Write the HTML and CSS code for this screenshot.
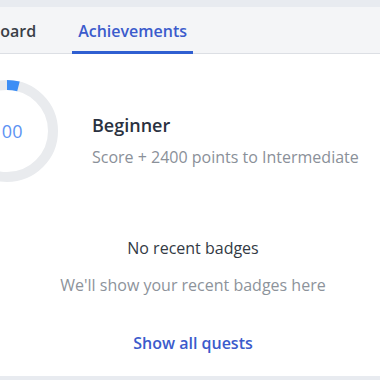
FILE: index.html
```html
<!DOCTYPE html>
<html lang="en">
<head>
    <meta charset="UTF-8">
    <title>Achievements</title>
    <link rel="stylesheet" href="styles.css">
</head>
<body>

<div class="card">

    <!-- Tabs -->
    <div class="tabs">
        <div class="tab">Leaderboard</div>
        <div class="tab active">Achievements</div>
    </div>

    <!-- Level -->
    <div class="level">
        <div class="ring">
            <svg width="102" height="102" viewBox="0 0 102 102">
                <circle cx="51" cy="51" r="46" fill="none" stroke="#e9ebee" stroke-width="10"/>
                <circle cx="51" cy="51" r="46" fill="none" stroke="#3d8ef5" stroke-width="10"
                        stroke-dasharray="11.6 289" transform="rotate(-90 51 51)"/>
            </svg>
            <span class="ring-score">100</span>
        </div>
        <div class="level-info">
            <div class="level-name">Beginner</div>
            <div class="level-next">Score + 2400 points to Intermediate</div>
        </div>
    </div>

    <!-- Badges -->
    <div class="badges">
        <div class="badges-title">No recent badges</div>
        <div class="badges-text">We'll show your recent badges here</div>
        <a class="quests" href="#">Show all quests</a>
    </div>

</div>

</body>
</html>
```

FILE: styles.css
```css
body {
    margin: 0;
    padding-top: 7px;
    background-color: #e8ebf0;
    font-family: "Open Sans", "Liberation Sans", sans-serif;
    overflow: hidden;
}
.card {
    margin-left: -69px;
    width: 524px;
    height: 369px;
    background-color: white;
}
.tabs {
    display: flex;
    gap: 30px;
    height: 47px;
    background-color: #f4f5f7;
    border-bottom: 1px solid #dcdfe4;
    box-sizing: border-box;
}
.tab {
    display: flex;
    align-items: center;
    padding: 4px 6px 0;
    font-size: 16px;
    font-weight: 600;
    color: #3a3f47;
    border-bottom: 3px solid transparent;
    margin-bottom: -1px;
}
.tab.active {
    color: #3b5bcc;
    border-bottom-color: #2f5fd1;
    border-radius: 2px 2px 0 0;
}
.level {
    display: flex;
    align-items: flex-start;
    gap: 34px;
    padding: 26px 0 0 25px;
}
.ring {
    position: relative;
    width: 102px;
    height: 102px;
}
.ring svg {
    display: block;
}
.ring-score {
    position: absolute;
    inset: 0;
    display: flex;
    align-items: center;
    justify-content: center;
    font-size: 18px;
    color: #5d93f3;
}
.level-info {
    padding-top: 33px;
}
.level-name {
    font-size: 18px;
    font-weight: 600;
    color: #2a3140;
}
.level-next {
    margin-top: 9px;
    font-size: 16px;
    color: #8a9099;
}
.badges {
    display: flex;
    flex-direction: column;
    align-items: center;
    padding-top: 55px;
}
.badges-title {
    font-size: 16px;
    color: #333a44;
}
.badges-text {
    margin-top: 15px;
    font-size: 16px;
    color: #8d939b;
}
.quests {
    margin-top: 36px;
    font-size: 16px;
    font-weight: 600;
    color: #3b5bcc;
    text-decoration: none;
}
```
